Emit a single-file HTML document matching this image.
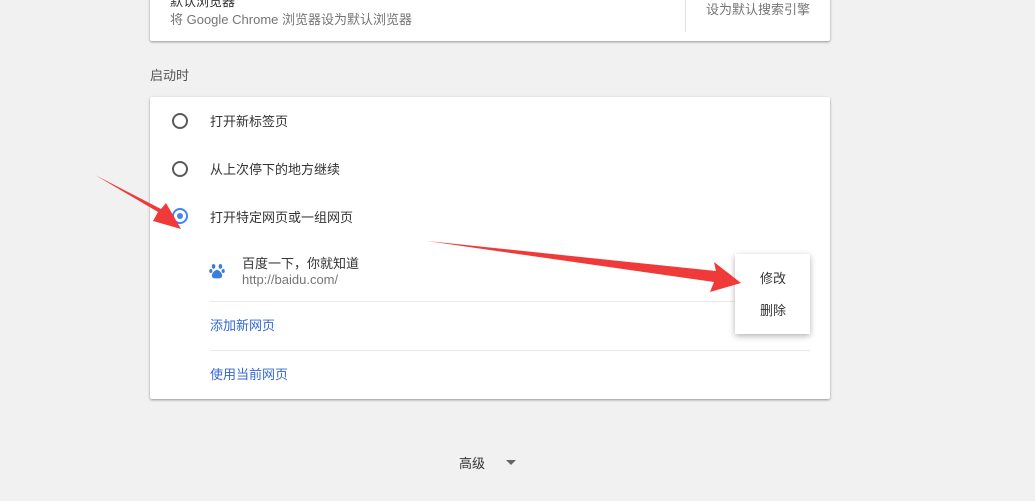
<!DOCTYPE html>
<html><head><meta charset="utf-8"><style>
body{margin:0;width:1035px;height:501px;background:#f1f1f1;position:relative;overflow:hidden;font-family:"Liberation Sans","Noto Sans CJK SC",sans-serif;font-size:13px;color:#333}
.card{position:absolute;left:150px;width:680px;background:#fff;box-shadow:0 1px 2px rgba(0,0,0,.3),0 1px 3px rgba(0,0,0,.1);border-radius:2px}
.t{position:absolute;white-space:nowrap}
.radio{position:absolute;left:22px;width:12px;height:12px;border:2px solid #5a5a5a;border-radius:50%}
.sel{border-color:#4285f4}
.sel:after{content:"";position:absolute;left:3px;top:3px;width:6px;height:6px;border-radius:50%;background:#4285f4}
.line{position:absolute;left:60px;right:20px;height:1px;background:#e8e8e8}
.link{color:#3367d6}
</style></head><body>
<div class="card" style="top:-10px;height:51px">
  <div class="t" style="left:20px;top:1px;color:#333">默认浏览器</div>
  <div class="t" style="left:20px;top:19px;color:#757575">将 Google Chrome 浏览器设为默认浏览器</div>
  <div style="position:absolute;left:535px;top:6px;width:1px;height:36px;background:#e0e0e0"></div>
  <div class="t" style="left:556px;top:9px;color:#757575">设为默认搜索引擎</div>
</div>
<div class="t" style="left:150px;top:65px;color:#555">启动时</div>
<div class="card" style="top:97px;height:302px">
  <div class="radio" style="top:16px"></div>
  <div class="t" style="left:60px;top:14px">打开新标签页</div>
  <div class="radio" style="top:64px"></div>
  <div class="t" style="left:60px;top:62px">从上次停下的地方继续</div>
  <div class="radio sel" style="top:111px"></div>
  <div class="t" style="left:60px;top:110px">打开特定网页或一组网页</div>
  <svg style="position:absolute;left:59px;top:166px" width="16" height="16" viewBox="0 0 14 14"><g fill="#3b7ddd"><ellipse cx="4" cy="3" rx="1.6" ry="2.1"/><ellipse cx="10" cy="3" rx="1.6" ry="2.1"/><ellipse cx="1.6" cy="7" rx="1.4" ry="1.8"/><ellipse cx="12.4" cy="7" rx="1.4" ry="1.8"/><path d="M7 6c-2 0-4.5 3-4.5 5s1.5 2.5 4.5 2.5 4.5-.5 4.5-2.5S9 6 7 6z"/></g></svg>
  <div class="t" style="left:92px;top:156px">百度一下，你就知道</div>
  <div class="t" style="left:92px;top:175px;color:#757575">http://baidu.com/</div>
  <div class="line" style="top:204px"></div>
  <div class="t link" style="left:60px;top:218px">添加新网页</div>
  <div class="line" style="top:253px"></div>
  <div class="t link" style="left:60px;top:267px">使用当前网页</div>
</div>
<div style="position:absolute;left:735px;top:254px;width:75px;height:80px;background:#fff;box-shadow:0 2px 6px rgba(0,0,0,.3)">
  <div class="t" style="left:25px;top:14px">修改</div>
  <div class="t" style="left:25px;top:46px">删除</div>
</div>
<div class="t" style="left:459px;top:453px;color:#333">高级</div>
<svg style="position:absolute;left:506px;top:460px" width="10" height="6"><path d="M0 0h10L5 5z" fill="#666"/></svg>
<svg style="position:absolute;left:0;top:0" width="1035" height="501">
  <path d="M95 175 L158 212 L153 221 L181 229 L166 203 L161 209 Z" fill="#f03a3a"/>
  <path d="M427 241 L716 271 L714 262 L741 283 L710 292 L714 282 Z" fill="#f03a3a"/>
</svg>
</body></html>
